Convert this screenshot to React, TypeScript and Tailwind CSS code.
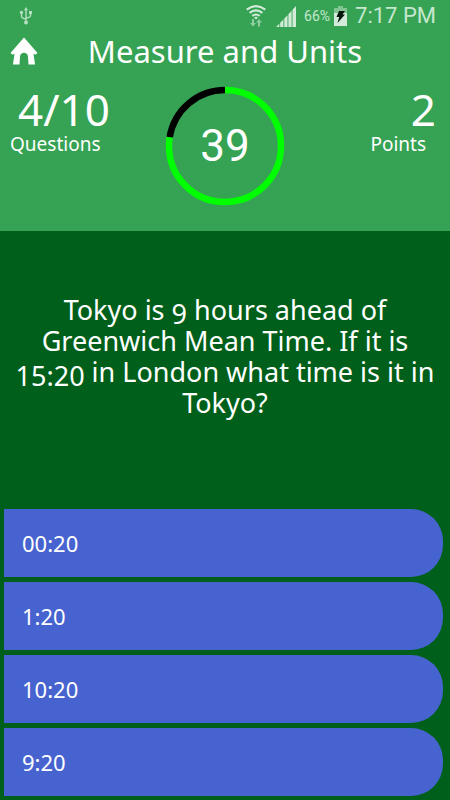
import { useState } from 'react';

const answers = ['00:20', '1:20', '10:20', '9:20'];

function UsbIcon() {
    return (
        <svg width="14" height="18" viewBox="0 0 14 18" fill="none" stroke="#b5dfc0" strokeWidth="1.4" aria-hidden="true">
            <path d="M7 2v14M2.500 6v3.200c0 1.600 1 2.300 4.500 2.800M11.500 6v2.600c0 1.600-1 2.100-4.500 2.600" />
            <path d="M7 0l2 3.200H5z" fill="#b5dfc0" stroke="none" />
            <circle cx="2.500" cy="5.500" r="1.700" fill="#b5dfc0" stroke="none" />
            <rect x="10" y="4" width="3" height="3" fill="#b5dfc0" stroke="none" />
            <circle cx="7" cy="15.500" r="2" fill="#b5dfc0" stroke="none" />
        </svg>
    )
}

function WifiIcon() {
    return (
        <svg width="20" height="22" viewBox="0 0 20 22" fill="none" stroke="#d2ecd9" strokeWidth="2" aria-hidden="true">
            <path d="M0.700 4.600Q10-2.400 19.300 4.600M3.600 7.900q6.400-5 12.800 0M6.300 10.900q3.700-2.800 7.400 0" />
            <path d="M8 12.500q2-1.600 4 0L10 14.500z" fill="#d2ecd9" stroke="none" />
            <path d="M6 14v4H4l3 3.500 3-3.500H8v-4zM12 21.500v-4h-2l3-3.500 3 3.500h-2v4z" fill="#8fcc9f" stroke="none" />
        </svg>
    )
}

function SignalIcon() {
    return (
        <svg width="20" height="21" viewBox="0 0 20 21" fill="#d2ecd9" aria-hidden="true">
            <path d="M0 21l3.300-3.300V21zM4.200 16.800l3.200-3.300V21H4.200zM8.300 12.600l3.200-3.400V21H8.300zM12.400 8.200l3.200-3.500V21h-3.200zM16.500 3.700L20 0v21h-3.500z" />
        </svg>
    )
}

function BatteryIcon() {
    return (
        <svg width="13" height="20" viewBox="0 0 13 20" aria-hidden="true">
            <path d="M4 0h5v2h4v5H0V2h4z" fill="#82c593" />
            <path d="M0 7h13v13H0z" fill="#d2ecd9" />
            <path d="M5 5h6L8.500 8.500H11L3.500 17l1.700-6H2.500z" fill="#06170b" />
        </svg>
    )
}

function HomeIcon() {
    return (
        <svg width="28" height="28" viewBox="0 0 28 28" fill="#fff" aria-hidden="true">
            <path d="M14 0.500L0.500 16l2.300 1.700 1.700-1.300L3 27.500h6.500l.5-8c.3-5 7.700-5 8 0l.5 8H25l-1.500-11.100 1.700 1.300 2.300-1.700z" />
        </svg>
    )
}

function Timer({ seconds }: { seconds: number }) {
    return (
        <div className="grid size-[120px] place-items-center">
            <svg className="col-start-1 row-start-1" width="120" height="120" viewBox="0 0 120 120" fill="none" strokeWidth="6.500" aria-hidden="true">
                <circle cx="60" cy="60" r="56" stroke="#000" pathLength="360" strokeDasharray="81 279" transform="rotate(189 60 60)" />
                <circle cx="60" cy="60" r="56" stroke="#00ff00" pathLength="360" strokeDasharray="279 81" transform="rotate(-90 60 60)" />
            </svg>
            <span className="col-start-1 row-start-1 font-['Roboto',sans-serif] text-[44px] leading-none">{seconds}</span>
        </div>
    )
}

export default function App() {

    const [picked, setPicked] = useState('')

    return (
        <div className="flex min-h-screen flex-col bg-[#005f1a] font-['Noto_Sans',sans-serif] text-white">
            <header className="bg-[#36a354] pb-[25px]">
                <div className="flex h-8 items-center justify-between pl-[19px] pr-[14px] font-['Roboto',sans-serif] text-[#c5e7ce]">
                    <UsbIcon />
                    <div className="flex items-center">
                        <WifiIcon />
                        <span className="ml-[10px]"><SignalIcon /></span>
                        <span className="ml-2 text-sm">66%</span>
                        <span className="ml-1"><BatteryIcon /></span>
                        <span className="ml-2 text-[22px] leading-8">7:17 PM</span>
                    </div>
                </div>
                <div className="grid h-[38px] grid-cols-[28px_1fr_28px] items-center px-[10px]">
                    <button type="button" aria-label="Home"><HomeIcon /></button>
                    <h1 className="text-center text-[31px] leading-[38px]">Measure and Units</h1>
                </div>
                <div className="grid grid-cols-[1fr_120px_1fr] pt-4">
                    <div className="pl-[10px]">
                        <p className="pl-2 text-[44px] leading-[46px]">4/10</p>
                        <p className="text-[19px] leading-6">Questions</p>
                    </div>
                    <Timer seconds={39} />
                    <div className="pr-[14px] text-right">
                        <p className="text-[44px] leading-[46px]">2</p>
                        <p className="pr-[10px] text-[19px] leading-6">Points</p>
                    </div>
                </div>
            </header>
            <main className="flex grow flex-col">
                <div className="flex grow items-center justify-center px-2 pb-7">
                    <p className="text-center text-[27px] leading-[31px]">
                        Tokyo is <span className="align-[-4px] leading-5">9</span> hours ahead of<br />
                        Greenwich Mean Time. If it is<br />
                        <span className="align-[-4px] leading-5">15:20</span> in London what time is it in<br />
                        Tokyo?
                    </p>
                </div>
                <div className="flex flex-col gap-[5px] pb-1 pl-[4px] pr-[7px]">
                    {answers.map((answer) => (
                        <button
                            key={answer}
                            type="button"
                            aria-pressed={picked === answer}
                            onClick={() => setPicked(answer)}
                            className="h-[68px] rounded-r-[32px] bg-[#4763d0] pl-[18px] text-left text-[22px]"
                        >
                            {answer}
                        </button>
                    ))}
                </div>
            </main>
        </div>
    )
}
